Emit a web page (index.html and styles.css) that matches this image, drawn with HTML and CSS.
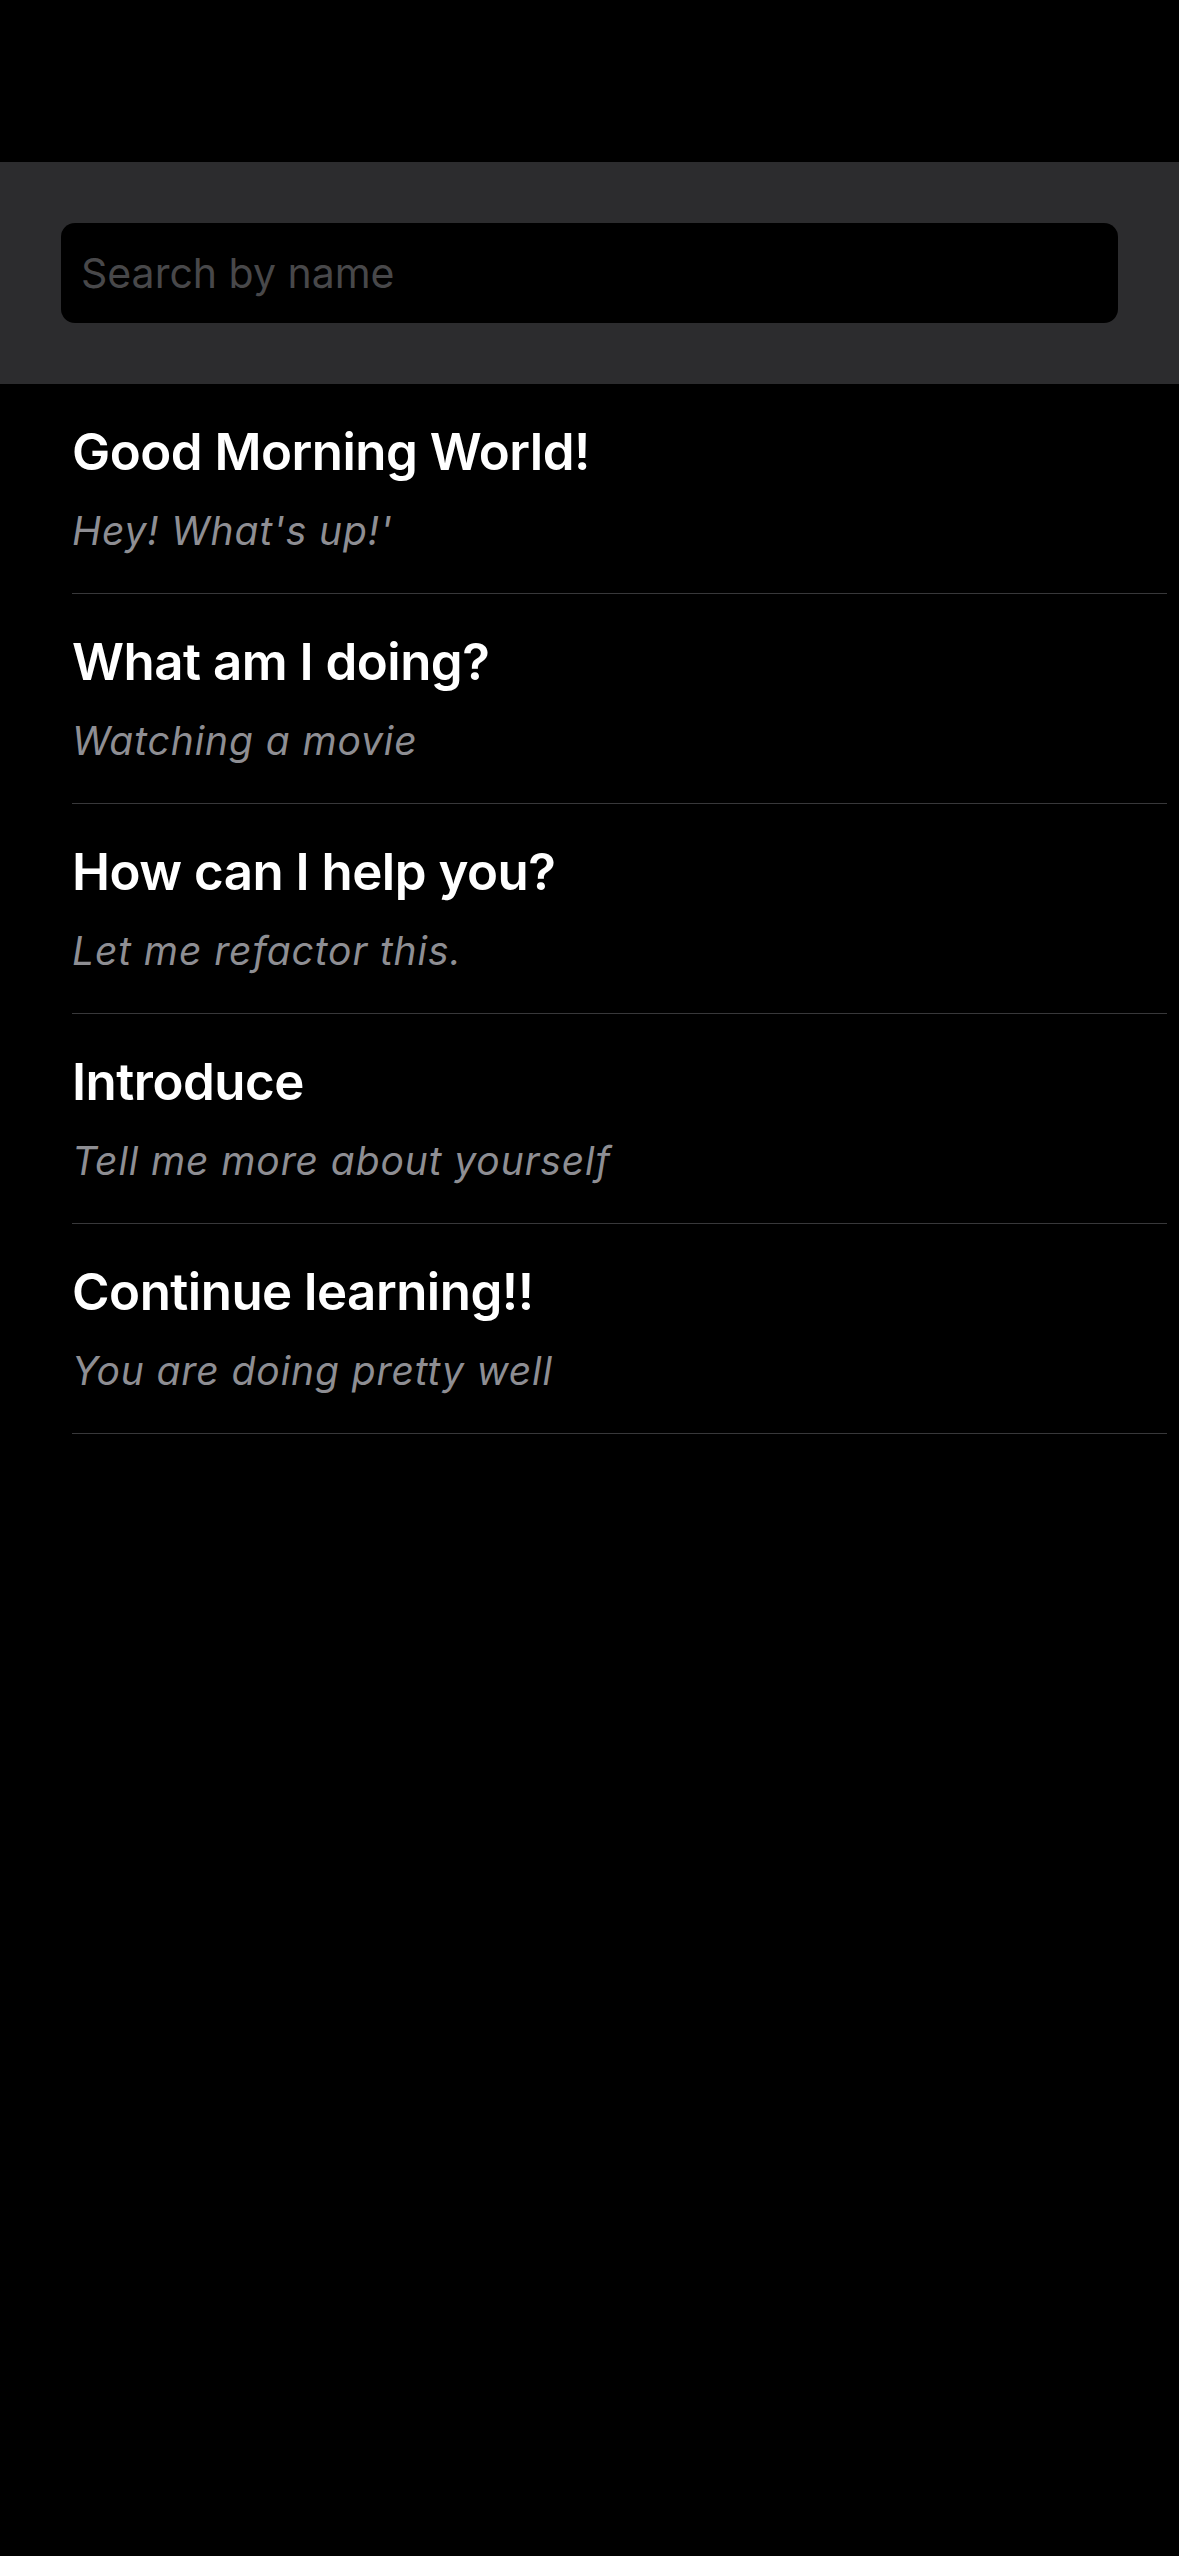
FILE: index.html
```html
<!DOCTYPE html>
<html lang="en">
<head>
<meta charset="utf-8">
<title>Messages</title>
<link rel="stylesheet" href="styles.css">
</head>
<body>
  <div class="status-area"></div>
  <header class="search-band">
    <div class="search-box">
      <input class="search-input" type="text" placeholder="Search by name">
    </div>
  </header>
  <ul class="list">
    <li class="row">
      <div class="title">Good Morning World!</div>
      <div class="subtitle">Hey! What's up!'</div>
    </li>
    <li class="row">
      <div class="title">What am I doing?</div>
      <div class="subtitle">Watching a movie</div>
    </li>
    <li class="row">
      <div class="title">How can I help you?</div>
      <div class="subtitle">Let me refactor this.</div>
    </li>
    <li class="row">
      <div class="title">Introduce</div>
      <div class="subtitle">Tell me more about yourself</div>
    </li>
    <li class="row">
      <div class="title">Continue learning!!</div>
      <div class="subtitle">You are doing pretty well</div>
    </li>
  </ul>
</body>
</html>
```

FILE: styles.css
```css
* {
  box-sizing: border-box;
}

html, body {
  margin: 0;
  padding: 0;
  background: #000;
}

body {
  width: 1179px;
  min-height: 2556px;
  font-family: Inter, Roboto, "Liberation Sans", sans-serif;
  color: #fff;
}

.status-area {
  height: 162px;
  background: #000;
}

.search-band {
  background: #2c2c2e;
  padding: 61px;
}

.search-box {
  height: 100px;
  background: #000;
  border-radius: 14px;
  display: flex;
  align-items: center;
  padding: 0 20px;
}

.search-input {
  width: 100%;
  background: transparent;
  border: none;
  outline: none;
  color: #fff;
  font-family: Inter, Roboto, "Liberation Sans", sans-serif;
  font-size: 41px;
  padding: 0;
  margin: 0;
}

.search-input::placeholder {
  color: #48484a;
}

.list {
  list-style: none;
  margin: 0;
  padding: 0 12px 0 72px;
}

.row {
  padding: 37px 0 39px 0;
  border-bottom: 1px solid #38383a;
  display: flex;
  flex-direction: column;
  gap: 26px;
}

.title {
  font-size: 51px;
  font-weight: 600;
  line-height: 61px;
  letter-spacing: -0.5px;
  color: #fff;
}

.subtitle {
  font-size: 39px;
  font-style: italic;
  line-height: 46px;
  letter-spacing: 0.9px;
  color: #8e8e93;
}
```
